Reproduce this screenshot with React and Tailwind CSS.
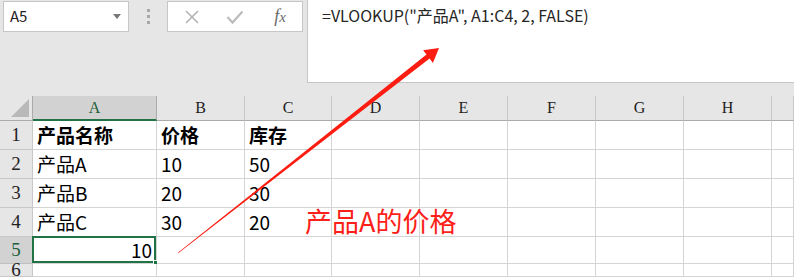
import React from 'react';

const colWidths = [124, 88, 87, 88, 88, 88, 88, 88, 22];
const colNames = ['A', 'B', 'C', 'D', 'E', 'F', 'G', 'H', ''];
const rowHeights = [29, 29, 29, 29, 27, 13];

const data = [
  [{ v: '产品名称', bold: true }, { v: '价格', bold: true }, { v: '库存', bold: true }],
  [{ v: '产品A' }, { v: '10' }, { v: '50' }],
  [{ v: '产品B' }, { v: '20' }, { v: '30' }],
  [{ v: '产品C' }, { v: '30' }, { v: '20' }],
  [{ v: '10', right: true }],
  [],
];

const cjk = { fontFamily: '"Noto Sans CJK SC", "Noto Sans", sans-serif' };
const serif = { fontFamily: '"Liberation Serif", "DejaVu Serif", serif' };

function TopBar() {
  return (
    <div className="flex h-[96px] items-start">
      <div className="flex items-start pl-[3px] pt-px">
        <div className="flex h-[31px] w-[126px] items-center justify-between border border-[#c6c6c6] bg-white pl-[6px] pr-[7px]">
          <span className="text-[15px] text-[#222]" style={cjk}>A5</span>
          <svg width="8" height="5" viewBox="0 0 8 5">
            <path d="M0 0 L8 0 L4 5 Z" fill="#777" />
          </svg>
        </div>
        <div className="flex h-[31px] w-[38px] flex-col items-center justify-center gap-[3px]">
          <div className="h-[3px] w-[3px] bg-[#a8a8a8]" />
          <div className="h-[3px] w-[3px] bg-[#a8a8a8]" />
          <div className="h-[3px] w-[3px] bg-[#a8a8a8]" />
        </div>
        <div className="flex h-[31px] w-[136px] items-center border border-[#c6c6c6] bg-white">
          <div className="flex w-[44px] justify-center pl-[3px]">
            <svg width="16" height="16" viewBox="0 0 16 16">
              <path d="M2 2 L14 14 M14 2 L2 14" stroke="#b4b4b4" strokeWidth="1.6" fill="none" />
            </svg>
          </div>
          <div className="flex w-[46px] justify-center">
            <svg width="18" height="16" viewBox="0 0 18 16">
              <path d="M1.5 8 L6.5 13.5 L16.5 2.5" stroke="#bcbcbc" strokeWidth="2.2" fill="none" />
            </svg>
          </div>
          <div className="flex w-[44px] justify-center">
            <span className="text-[18px] italic text-[#6a6a6a]" style={serif}>
              f<span className="text-[15px]">x</span>
            </span>
          </div>
        </div>
      </div>
      <div className="ml-[4px] h-[83px] flex-1 border-b border-l border-[#c6c6c6] bg-white pl-[14px] pt-[3px]">
        <span className="text-[16px] text-[#262626]" style={cjk}>
          =VLOOKUP("产品A", A1:C4, 2, FALSE)
        </span>
      </div>
    </div>
  );
}

function Sheet() {
  const gridCols = '33px ' + colWidths.map((w) => w + 'px').join(' ');
  const gridRows = '25px ' + rowHeights.map((h) => h + 'px').join(' ');
  return (
    <div className="grid" style={{ gridTemplateColumns: gridCols, gridTemplateRows: gridRows }}>
      <div className="flex items-end justify-end border-b border-r border-[#ababab] bg-[#e6e6e6] pb-[3px] pr-[3px]">
        <svg width="18" height="18" viewBox="0 0 18 18">
          <path d="M18 0 L18 18 L0 18 Z" fill="#b9b9b9" />
        </svg>
      </div>
      {colNames.map((c, i) => (
        <div
          key={c + i}
          className={
            i === 0
              ? 'flex items-center justify-center border-b-2 border-r border-b-[#217346] border-r-[#ababab] bg-[#d2d2d2] text-[16px] text-[#1e5e3a]'
              : 'flex items-center justify-center border-b border-r border-b-[#ababab] border-r-[#c8c8c8] bg-[#e6e6e6] text-[16px] text-[#222]'
          }
          style={serif}
        >
          {c}
        </div>
      ))}
      {rowHeights.map((h, r) => (
        <React.Fragment key={r}>
          <div
            className={
              r === 4
                ? 'flex items-center justify-center border-b border-r border-[#c0c0c0] bg-[#d2d2d2] text-[19px] text-[#1e5e3a]'
                : 'flex items-center justify-center border-b border-r border-[#c8c8c8] bg-[#e6e6e6] text-[19px] text-[#222]'
            }
            style={serif}
          >
            {r + 1}
          </div>
          {colWidths.map((w, c) => {
            const cell = data[r][c];
            const active = r === 4 && c === 0;
            return (
              <div
                key={c}
                className={
                  'relative flex items-center overflow-visible border-b border-r border-[#d4d4d4] bg-white px-[4px] text-[19px] text-black' +
                  (cell && cell.right ? ' justify-end' : '')
                }
                style={cjk}
              >
                {cell && <span className={cell.bold ? 'font-bold' : 'font-normal'}>{cell.v}</span>}
                {active && (
                  <>
                    <div className="absolute -left-px -top-px bottom-0 right-0 border-2 border-[#217346]" />
                    <div className="absolute -bottom-[3px] -right-[3px] h-[6px] w-[6px] border border-white bg-[#217346]" />
                  </>
                )}
              </div>
            );
          })}
        </React.Fragment>
      ))}
    </div>
  );
}

export default function App() {
  return (
    <div className="relative h-[277px] w-[794px] overflow-hidden bg-[#e6e6e6]">
      <TopBar />
      <Sheet />
      <svg className="pointer-events-none absolute left-0 top-0" width="794" height="277" viewBox="0 0 794 277">
        <path
          d="M177.8 252.8 L426.5 54.6 L423.1 50.3 L439 48 L432.9 62.9 L429.6 58.6 L178.2 253.2 Z"
          fill="#fb1d12"
        />
      </svg>
      <div
        className="pointer-events-none absolute left-[305px] top-[207px] text-[27px] leading-none text-[#fc1f1a]"
        style={cjk}
      >
        产品A的价格
      </div>
    </div>
  );
}
